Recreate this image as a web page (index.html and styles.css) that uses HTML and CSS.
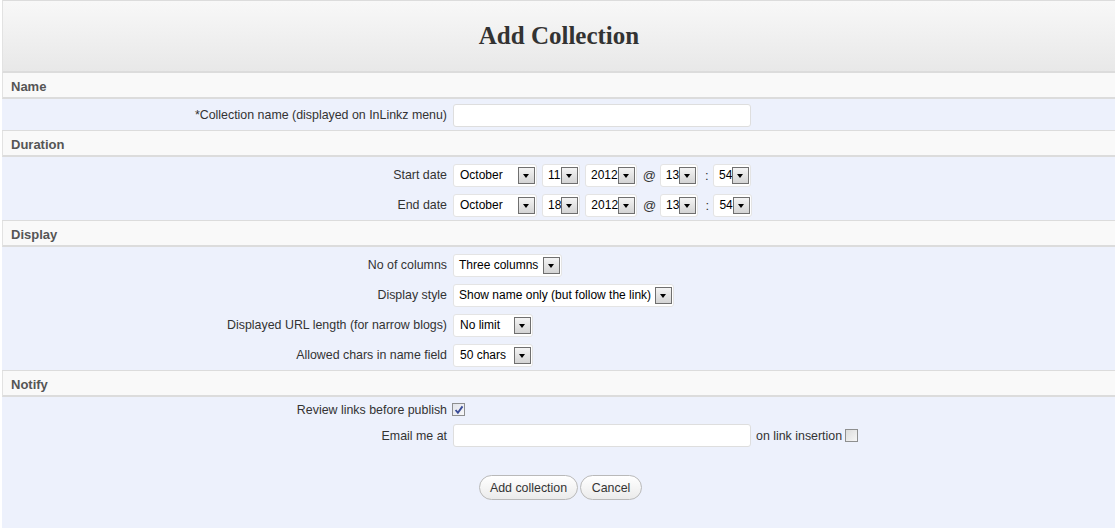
FILE: index.html
```html
<!DOCTYPE html>
<html>
<head>
<meta charset="utf-8">
<title>Add Collection</title>
<link rel="stylesheet" href="styles.css">
</head>
<body>
<div class="wrap">
  <div class="title-bar"><h1>Add Collection</h1></div>

  <div class="sec-head">Name</div>
  <div class="sec-body sec-name">
    <div class="row">
      <label class="lbl">*Collection name (displayed on InLinkz menu)</label>
      <div class="ctl"><span class="text-input"></span></div>
    </div>
  </div>

  <div class="sec-head">Duration</div>
  <div class="sec-body">
    <div class="row">
      <label class="lbl">Start date</label>
      <div class="ctl">
        <span class="sel w-month"><span class="val">October</span><span class="arr"></span></span>
        <span class="sel w-day"><span class="val">11</span><span class="arr"></span></span>
        <span class="sel w-year"><span class="val">2012</span><span class="arr"></span></span>
        <span class="sep at">@</span>
        <span class="sel w-hour"><span class="val">13</span><span class="arr"></span></span>
        <span class="sep colon">:</span>
        <span class="sel w-min"><span class="val">54</span><span class="arr"></span></span>
      </div>
    </div>
    <div class="row">
      <label class="lbl">End date</label>
      <div class="ctl">
        <span class="sel w-month"><span class="val">October</span><span class="arr"></span></span>
        <span class="sel w-day"><span class="val">18</span><span class="arr"></span></span>
        <span class="sel w-year"><span class="val">2012</span><span class="arr"></span></span>
        <span class="sep at">@</span>
        <span class="sel w-hour"><span class="val">13</span><span class="arr"></span></span>
        <span class="sep colon">:</span>
        <span class="sel w-min"><span class="val">54</span><span class="arr"></span></span>
      </div>
    </div>
  </div>

  <div class="sec-head">Display</div>
  <div class="sec-body">
    <div class="row">
      <label class="lbl">No of columns</label>
      <div class="ctl"><span class="sel w-cols"><span class="val">Three columns</span><span class="arr"></span></span></div>
    </div>
    <div class="row">
      <label class="lbl">Display style</label>
      <div class="ctl"><span class="sel w-style"><span class="val">Show name only (but follow the link)</span><span class="arr"></span></span></div>
    </div>
    <div class="row">
      <label class="lbl">Displayed URL length (for narrow blogs)</label>
      <div class="ctl"><span class="sel w-small"><span class="val">No limit</span><span class="arr"></span></span></div>
    </div>
    <div class="row">
      <label class="lbl">Allowed chars in name field</label>
      <div class="ctl"><span class="sel w-small"><span class="val">50 chars</span><span class="arr"></span></span></div>
    </div>
  </div>

  <div class="sec-head">Notify</div>
  <div class="sec-body sec-notify">
    <div class="row row-check">
      <label class="lbl">Review links before publish</label>
      <div class="ctl"><span class="cbox checked"><svg width="10" height="10" viewBox="0 0 10 10"><path d="M1.6 5 L3.9 7.8 L8.5 1.4" fill="none" stroke="#3a4c98" stroke-width="1.9"/></svg></span></div>
    </div>
    <div class="row row-email">
      <label class="lbl">Email me at</label>
      <div class="ctl"><span class="text-input"></span><span class="after">on link insertion</span><span class="cbox"></span></div>
    </div>
    <div class="buttons">
      <button class="btn btn-add">Add collection</button>
      <button class="btn btn-cancel">Cancel</button>
    </div>
  </div>
</div>
</body>
</html>
```

FILE: styles.css
```css
html, body {
  margin: 0;
  padding: 0;
  height: 100%;
  background: #ffffff;
}

body {
  font-family: "Liberation Sans", Arial, sans-serif;
  font-size: 12.4px;
  color: #333;
}

.wrap {
  margin: 0 1px 0 2px;
  min-height: 100%;
  display: flex;
  flex-direction: column;
}

.title-bar {
  height: 70px;
  border-top: 1px solid #dcdcdc;
  border-left: 1px solid #e2e2e2;
  border-bottom: 2px solid #dcdcdc;
  background: linear-gradient(#f8f8f8, #e8e8e8);
  display: flex;
  align-items: center;
  justify-content: center;
}

.title-bar h1 {
  margin: 0;
  padding-top: 0;
  font-family: "Liberation Serif", "Times New Roman", serif;
  font-weight: bold;
  font-size: 25px;
  color: #333;
}

.sec-head {
  height: 24px;
  line-height: 27px;
  padding-left: 8px;
  background: #f9f9f9;
  border-left: 1px solid #e2e2e2;
  border-bottom: 2px solid #dcdcdc;
  font-weight: bold;
  font-size: 13px;
  color: #555;
}

.sec-body {
  background: #edf1fc;
  border-bottom: 1px solid #dcdcdc;
  padding-top: 3px;
}

.sec-name {
  padding-top: 1px;
}

.row {
  display: grid;
  grid-template-columns: 445px auto;
  column-gap: 6px;
  height: 30px;
  align-items: center;
}

.lbl {
  text-align: right;
  white-space: nowrap;
  color: #333;
}

.ctl {
  display: flex;
  align-items: center;
}

.text-input {
  display: block;
  width: 296px;
  height: 21px;
  background: #fff;
  border: 1px solid #dedede;
  border-radius: 3px;
}

.sel {
  display: flex;
  align-items: center;
  box-sizing: border-box;
  height: 23px;
  padding: 0 1px 0 5px;
  background: #fff;
  border: 1px solid #e4e4e4;
  border-radius: 3px;
  margin-right: 5px;
  color: #000;
  font-size: 12px;
  white-space: nowrap;
}

.sel .val {
  flex: 1 0 auto;
}

.arr {
  display: block;
  box-sizing: border-box;
  width: 17px;
  height: 17px;
  border: 1px solid #6f6f6f;
  background: linear-gradient(#f4f4f4, #d4d4d4);
  position: relative;
  flex: none;
}

.arr::after {
  content: "";
  position: absolute;
  left: 4px;
  top: 6px;
  border-left: 3.5px solid transparent;
  border-right: 3.5px solid transparent;
  border-top: 4px solid #000;
}

.w-month { min-width: 84px; }
.w-day { min-width: 38px; }
.w-year { min-width: 51px; }
.w-hour { min-width: 38px; }
.w-min { min-width: 38px; }
.w-cols { min-width: 109px; }
.w-style { min-width: 221px; }
.w-small { min-width: 80px; }

.w-month .val, .w-small .val {
  padding-left: 1px;
}

.sel.w-year { margin-right: 6px; }

.sep {
  color: #333;
  font-size: 13px;
}

.at {
  width: 12px;
  margin-right: 5px;
}

.colon {
  margin: 0 0 0 2px;
  width: 8px;
}

.sec-notify {
  flex: 1;
  padding-top: 0;
  border-bottom: none;
}

.row-check {
  height: 25px;
}

.row-email {
  height: 27px;
}

.cbox {
  display: inline-flex;
  align-items: center;
  justify-content: center;
  box-sizing: border-box;
  width: 13px;
  height: 13px;
  border: 1px solid #8e8f8f;
  background: linear-gradient(135deg, #dcdcdc, #f6f6f6);
  margin-left: -1px;
}

.cbox.checked {
  background: linear-gradient(135deg, #e2e4ea, #f7f7f9);
}

.after {
  margin-left: 5px;
  margin-right: 3px;
  color: #333;
}

.row-email .cbox {
  margin-left: 0;
}

.buttons {
  display: flex;
  justify-content: center;
  gap: 2px;
  margin-top: 26px;
  padding-left: 4px;
}

.btn {
  font-family: "Liberation Sans", Arial, sans-serif;
  font-size: 12.4px;
  color: #333;
  height: 25px;
  padding: 0 8px;
  border: 1px solid #b9b9b9;
  border-radius: 13px;
  background: linear-gradient(#ffffff, #ebebeb);
}

.btn-add { width: 99px; }
.btn-cancel { width: 62px; }
```
